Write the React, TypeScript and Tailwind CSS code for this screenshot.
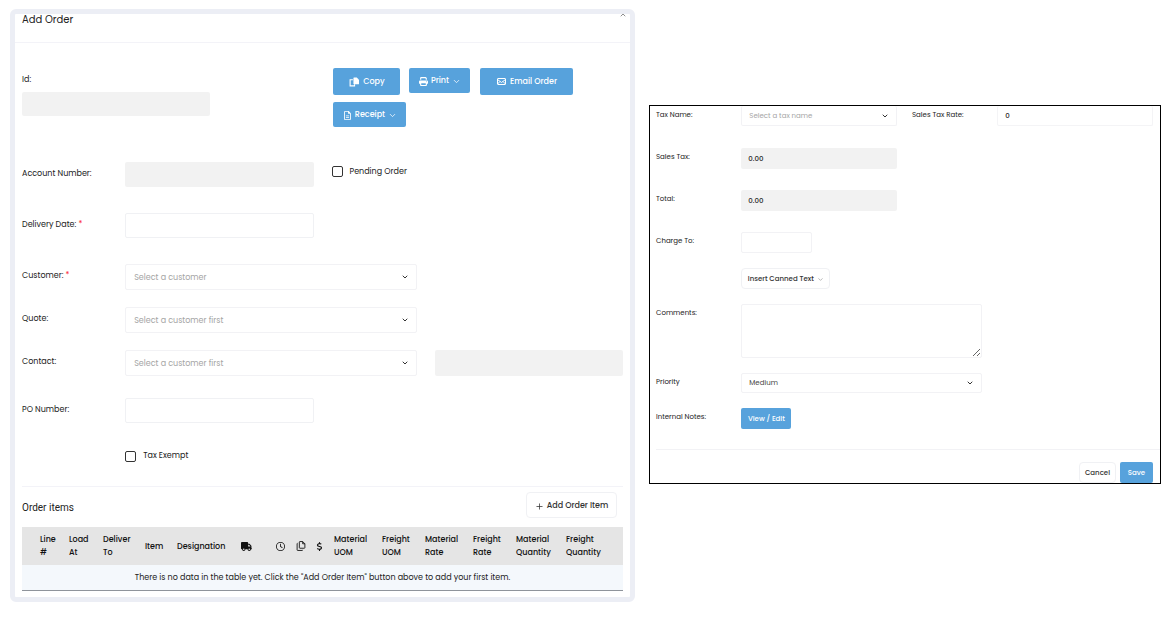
import type { ReactNode } from "react";
import { ChevronDown, ChevronUp, Plus } from "lucide-react";
import { FaDollarSign, FaPrint, FaRegClock, FaRegFileLines, FaTruck } from "react-icons/fa6";
import { clsx } from "clsx";

const primary = "flex items-center justify-center rounded-xs bg-[#57a2dc] font-medium text-white";
const outline = "flex items-center justify-center rounded-sm border border-[#f0f1f4] bg-white font-medium text-[#333]";

const columns: { key: string; label: ReactNode; width: string }[] = [
  { key: "line", label: <>Line<br />#</>, width: "w-[29px]" },
  { key: "load", label: <>Load<br />At</>, width: "w-[34px]" },
  { key: "deliver", label: <>Deliver<br />To</>, width: "w-[42px]" },
  { key: "item", label: "Item", width: "w-[32px]" },
  { key: "designation", label: "Designation", width: "w-[64px]" },
  { key: "truck", label: <FaTruck className="size-[11px]" />, width: "w-[35px]" },
  { key: "time", label: <FaRegClock className="size-[9px]" />, width: "w-[20px]" },
  { key: "copies", label: <CopiesIcon />, width: "w-[19px]" },
  { key: "price", label: <FaDollarSign className="size-[9px]" />, width: "w-[19px]" },
  { key: "materialUom", label: <>Material<br />UOM</>, width: "w-[48px]" },
  { key: "freightUom", label: <>Freight<br />UOM</>, width: "w-[43px]" },
  { key: "materialRate", label: <>Material<br />Rate</>, width: "w-[48px]" },
  { key: "freightRate", label: <>Freight<br />Rate</>, width: "w-[43px]" },
  { key: "materialQty", label: <>Material<br />Quantity</>, width: "w-[50px]" },
  { key: "freightQty", label: <>Freight<br />Quantity</>, width: "w-[57px]" },
];

function CopyIcon() {
  return (
    <svg viewBox="0 0 18 18" className="size-[10px]">
      <path d="M7 5H2v11h8v-3" fill="none" stroke="currentColor" strokeWidth="2" />
      <path d="M9 1h5l4 4v7a1 1 0 0 1-1 1H9a1 1 0 0 1-1-1V2a1 1 0 0 1 1-1z" fill="currentColor" />
    </svg>
  );
}

function CopiesIcon() {
  return (
    <svg viewBox="0 0 18 18" className="size-[10px]" fill="none" stroke="currentColor" strokeWidth="1.6">
      <path d="M7 1h5l4 4v7a1 1 0 0 1-1 1H7a1 1 0 0 1-1-1V2a1 1 0 0 1 1-1zM12 1v4h4" />
      <path d="M3 4a1 1 0 0 0-1 1v11a1 1 0 0 0 1 1h8a1 1 0 0 0 1-1" />
    </svg>
  );
}

function MailIcon() {
  return (
    <svg viewBox="0 0 18 18" className="size-[9px]" fill="none" stroke="currentColor" strokeWidth="2">
      <rect x="1" y="3" width="16" height="12" rx="1" />
      <path d="M1 5l8 6 8-6M1 14l5-5M17 14l-5-5" />
    </svg>
  );
}

type SelectProps = {
  id: string;
  value: string;
  className?: string;
  inputClassName: string;
};

function Select({ id, value, className, inputClassName }: SelectProps) {
  return (
    <div className={clsx("relative", className)}>
      <select
        id={id}
        className={clsx("block w-full appearance-none rounded-xs border border-[#f2f2f5] bg-white", inputClassName)}
      >
        <option>{value}</option>
      </select>
      <ChevronDown
        strokeWidth={3}
        className="pointer-events-none absolute inset-y-0 right-2 my-auto size-2 text-[#333]"
      />
    </div>
  );
}

function OrderLabel({ id, required, children }: { id: string; required?: boolean; children: string }) {
  return (
    <label htmlFor={id} className="col-span-2 pt-1.5 leading-3 whitespace-nowrap">
      {children}
      {required ? <span className="text-red-500"> *</span> : null}
    </label>
  );
}

function TaxLabel({ id, children }: { id: string; children: string }) {
  return (
    <label htmlFor={id} className="col-span-2 pt-1 leading-[10px] whitespace-nowrap">
      {children}
    </label>
  );
}

function OrderPanel() {
  const row = "grid grid-cols-12 gap-x-[18px]";
  const input = "block h-[25px] w-full rounded-xs border border-[#f0f1f4] px-2";
  const disabled = "block w-full rounded-xs bg-[#f2f2f2] px-2";
  const select = "h-[26px] px-2 pt-0.5 text-[8px] text-[#a5a5a5]";
  const checkbox = "size-[11px] appearance-none rounded-xs border border-[#333] bg-white";

  return (
    <section className="rounded-md border-5 border-[#eceef5] bg-white text-[8px] text-[#222]">
      <header className="flex h-[29px] items-start justify-between border-b border-[#f3f3f8] pr-[3px] pl-[7px]">
        <h1 className="text-[10px] leading-[11px]">Add Order</h1>
        <button aria-label="Collapse" className="h-1 overflow-hidden text-[#555]">
          <ChevronUp className="-mt-[3px] size-2" />
        </button>
      </header>

      <div className="pr-[7px] pb-[6px] pl-[7px]">
        <div className={clsx(row, "pt-[25px]")}>
          <div className="col-span-4 pt-1.5">
            <label htmlFor="order-id" className="block leading-3">
              Id:
            </label>
            <input id="order-id" disabled className={clsx(disabled, "mt-1.5 h-6")} />
          </div>
          <div className="col-span-6 col-start-7 flex flex-wrap items-start gap-y-[7px] pl-0.5">
            <button className={clsx(primary, "mr-[9px] h-[27px] w-[67px] gap-1")}>
              <CopyIcon />
              Copy
            </button>
            <button className={clsx(primary, "mr-[10px] h-[25px] w-[61px] gap-[3px] pt-px")}>
              <FaPrint className="size-[9px]" />
              Print
              <ChevronDown strokeWidth={2} className="size-[9px]" />
            </button>
            <button className={clsx(primary, "h-[27px] w-[93px] gap-1")}>
              <MailIcon />
              Email Order
            </button>
            <button className={clsx(primary, "h-[25px] w-[73px] gap-[3px] pt-px")}>
              <FaRegFileLines className="size-[9px]" />
              Receipt
              <ChevronDown strokeWidth={2} className="size-[9px]" />
            </button>
          </div>
        </div>

        <div className={clsx(row, "mt-[35px]")}>
          <OrderLabel id="account">Account Number:</OrderLabel>
          <div className="col-span-4">
            <input id="account" disabled className={clsx(disabled, "h-[25px]")} />
          </div>
          <label className="col-span-4 flex h-[19px] items-center gap-[7px]">
            <input type="checkbox" className={checkbox} />
            Pending Order
          </label>
        </div>

        <div className={clsx(row, "mt-[26px]")}>
          <OrderLabel id="delivery" required>
            Delivery Date:
          </OrderLabel>
          <div className="col-span-4">
            <input id="delivery" className={input} />
          </div>
        </div>

        <div className={clsx(row, "mt-[26px] gap-y-[17px]")}>
          <OrderLabel id="customer" required>
            Customer:
          </OrderLabel>
          <Select id="customer" value="Select a customer" className="col-span-6" inputClassName={select} />
          <div className="col-span-4" />
          <OrderLabel id="quote">Quote:</OrderLabel>
          <Select id="quote" value="Select a customer first" className="col-span-6" inputClassName={select} />
          <div className="col-span-4" />
          <OrderLabel id="contact">Contact:</OrderLabel>
          <Select id="contact" value="Select a customer first" className="col-span-6" inputClassName={select} />
          <div className="col-span-4">
            <input aria-label="Contact details" disabled className={clsx(disabled, "h-[26px]")} />
          </div>
        </div>

        <div className={clsx(row, "mt-[22px]")}>
          <OrderLabel id="po">PO Number:</OrderLabel>
          <div className="col-span-4">
            <input id="po" className={input} />
          </div>
        </div>

        <div className={clsx(row, "mt-[26px]")}>
          <label className="col-span-4 col-start-3 flex h-[14px] items-center gap-[7px]">
            <input type="checkbox" className={checkbox} />
            Tax Exempt
          </label>
        </div>

        <hr className="mt-[23px] border-[#f3f3f8]" />

        <div className="mt-[5px] mb-[9px] flex items-center justify-between pr-[6px]">
          <h2 className="pt-1 font-[Roboto,sans-serif] text-[10px]">Order items</h2>
          <button className={clsx(outline, "h-[26px] w-[91px] gap-[3px] pt-0.5")}>
            <Plus className="size-[9px]" />
            Add Order Item
          </button>
        </div>

        <table className="w-full table-fixed border-b border-[#8f949b] text-left">
          <thead className="bg-[#e5e5e5] text-[#111]">
            <tr className="h-[38px]">
              <th className="w-[18px]" />
              {columns.map((column) => (
                <th key={column.key} className={clsx(column.width, "leading-[13px] font-medium whitespace-nowrap")}>
                  {column.label}
                </th>
              ))}
            </tr>
          </thead>
          <tbody>
            <tr className="h-[25px] bg-[#f4f8fc] text-center">
              <td colSpan={16} className="pt-0.5">
                There is no data in the table yet. Click the "Add Order Item" button above to add your first item.
              </td>
            </tr>
          </tbody>
        </table>
      </div>
    </section>
  );
}

function TaxPanel() {
  const row = "grid grid-cols-12 gap-x-[15px]";
  const box = "block h-[21px] w-full rounded-xs px-[7px]";

  return (
    <section className="mt-[96px] border border-black bg-white text-[7px] text-[#222]">
      <div className="pr-[7px] pl-[6px]">
        <div className={row}>
          <TaxLabel id="tax-name">Tax Name:</TaxLabel>
          <Select
            id="tax-name"
            value="Select a tax name"
            className="col-span-4"
            inputClassName="h-5 border-t-0 px-[7px] pt-px text-[#a5a5a5]"
          />
          <TaxLabel id="tax-rate">Sales Tax Rate:</TaxLabel>
          <div className="col-span-4">
            <input
              id="tax-rate"
              defaultValue="0"
              className="block h-5 w-full rounded-xs border border-t-0 border-[#f4f4f6] px-[7px] font-medium"
            />
          </div>
        </div>

        <div className={clsx(row, "mt-[22px] gap-y-[21px]")}>
          <TaxLabel id="sales-tax">Sales Tax:</TaxLabel>
          <div className="col-span-4">
            <input id="sales-tax" disabled value="0.00" className={clsx(box, "bg-[#f2f2f2] font-medium")} />
          </div>
          <div className="col-span-6" />
          <TaxLabel id="total">Total:</TaxLabel>
          <div className="col-span-4">
            <input id="total" disabled value="0.00" className={clsx(box, "bg-[#f2f2f2] font-medium")} />
          </div>
          <div className="col-span-6" />
          <TaxLabel id="charge-to">Charge To:</TaxLabel>
          <div className="col-span-2">
            <input id="charge-to" className={clsx(box, "border border-[#f2f2f5]")} />
          </div>
        </div>

        <div className={clsx(row, "mt-[15px] gap-y-[15px]")}>
          <div className="col-span-6 col-start-3">
            <button className={clsx(outline, "h-[21px] w-[89px] gap-[3px] pt-px")}>
              Insert Canned Text
              <ChevronDown className="size-[7px] text-[#888]" />
            </button>
          </div>
          <div className="col-span-4" />
          <TaxLabel id="comments">Comments:</TaxLabel>
          <textarea
            id="comments"
            className="col-span-6 h-[54px] resize rounded-xs border border-[#f2f2f5]"
          />
          <div className="col-span-4" />
          <TaxLabel id="priority">Priority</TaxLabel>
          <Select id="priority" value="Medium" className="col-span-6" inputClassName="h-5 px-[7px] text-[#444]" />
          <div className="col-span-4" />
          <TaxLabel id="notes">Internal Notes:</TaxLabel>
          <div className="col-span-6">
            <button id="notes" className={clsx(primary, "h-[21px] w-[50px] pt-px")}>
              View / Edit
            </button>
          </div>
        </div>
      </div>

      <footer className="mt-5 ml-[6px] flex justify-end gap-1 border-t border-[#f2f2f5] pt-3 pr-[7px]">
        <button className={clsx(outline, "h-[21px] w-[37px] pt-px")}>Cancel</button>
        <button className={clsx(primary, "h-[21px] w-[33px] pt-px")}>Save</button>
      </footer>
    </section>
  );
}

export default function App() {
  return (
    <main className="grid min-h-screen grid-cols-[625fr_512fr] items-start gap-[14px] bg-white pt-[9px] pr-2 pl-[10px] font-[Poppins,Inter,sans-serif]">
      <OrderPanel />
      <TaxPanel />
    </main>
  );
}
